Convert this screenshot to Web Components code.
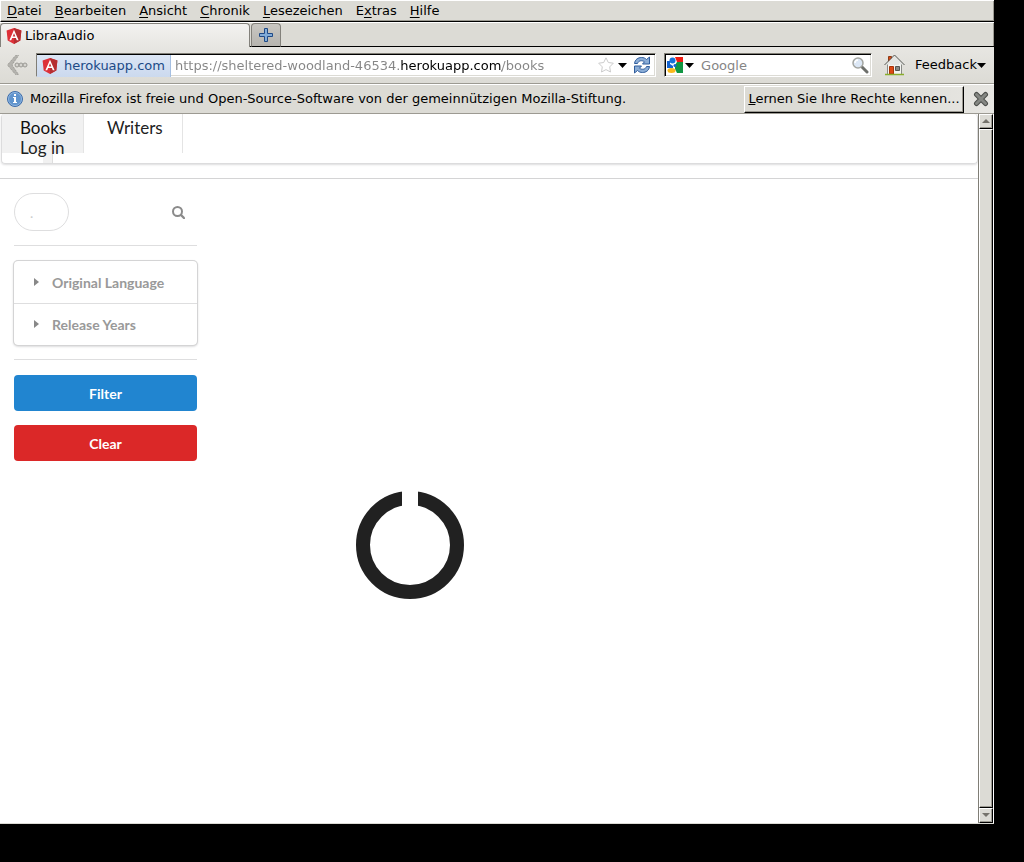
<!DOCTYPE html>
<html lang="de">
<head>
<meta charset="utf-8">
<title>LibraAudio</title>
<style>
html, body { margin: 0; background: #000; }
body { font: 13px/16px "DejaVu Sans", sans-serif; color: #000; }
</style>
</head>
<body>
<browser-window>
  <menu-bar slot="chrome"></menu-bar>
  <tab-strip slot="chrome"></tab-strip>
  <nav-toolbar slot="chrome"></nav-toolbar>
  <info-bar slot="chrome">Mozilla Firefox ist freie und Open-Source-Software von der gemeinnützigen Mozilla-Stiftung.</info-bar>
  <libra-app></libra-app>
</browser-window>

<script>
const define = (name, css, html) => customElements.define(name, class extends HTMLElement {
  constructor() {
    super();
    this.attachShadow({ mode: "open" }).innerHTML =
      `<style>:host,*{box-sizing:border-box}button,input{font:inherit;color:inherit;margin:0;padding:0;border:0;background:none}svg{display:block;flex:none}${css}</style>${html}`;
  }
});

define("angular-icon", `:host{display:block;flex:none}`, `
<svg width="16" height="16" viewBox="0 0 16 16"><path d="M8 0 15.400 2.600 14.300 12.500 8 16 1.700 12.500.600 2.600Z" fill="#dd3038"/><path d="M8 0 15.400 2.600 14.300 12.500 8 16Z" fill="#b52e31"/><path d="M8 1.800 3.400 12.200H5.200L6.100 9.900H9.900L10.800 12.200H12.600ZM8 5.200 9.300 8.400H6.700Z" fill="#fff" fill-rule="evenodd"/></svg>`);

define("browser-window", `
:host{display:flex;flex-direction:column;height:calc(100vh - 38px);margin-right:30px;background:#dcdbd5;overflow:hidden}
.view{flex:1;min-height:0;display:flex;background:#fff;border-bottom:1px solid #dcdbd5}
main{flex:1;min-width:0;overflow:hidden}`, `
<slot name="chrome"></slot>
<div class="view"><main><slot></slot></main><scroll-track></scroll-track></div>`);

define("scroll-track", `
:host{display:flex;flex-direction:column;width:16px;background:#dcdbd5;border-left:1px solid #807e76;border-right:1px solid #fff}
button{display:grid;place-items:center;height:15px;flex:none;border:1px solid;border-color:#fff #000 #000 #fff;box-shadow:inset -1px -1px #9c9a92}
.thumb{flex:1;border:1px solid;border-color:#fff #000 #000 #fff;box-shadow:inset -1px -1px #9c9a92}`, `
<button aria-label="Nach oben"><svg width="8" height="5"><path d="M0 4 4 0 8 4Z" fill="#75736c"/></svg></button>
<div class="thumb"></div>
<button aria-label="Nach unten"><svg width="8" height="5"><path d="M0 0 4 4 8 0Z" fill="#75736c"/></svg></button>`);

define("menu-bar", `
:host{display:flex;height:22px;flex:none;padding-left:1px;border-top:1px solid #fff;border-bottom:1px solid #000;border-left:1px solid #fff;box-shadow:inset -1px -1px #9c9a92}
button{height:19px;padding:0 8px 0 5px;white-space:nowrap}
u{text-underline-offset:2px}`, `
<button><u>D</u>atei</button><button><u>B</u>earbeiten</button><button><u>A</u>nsicht</button><button><u>C</u>hronik</button><button><u>L</u>esezeichen</button><button>E<u>x</u>tras</button><button><u>H</u>ilfe</button>`);

define("tab-strip", `
:host{display:flex;align-items:flex-end;height:25px;flex:none;border-top:1px solid #fff;box-shadow:inset 0 -1px #000,inset -1px 0 #9c9a92}
button{display:flex;align-items:center;height:24px;border:1px solid #83817b;border-bottom:0;border-radius:4px 4px 0 0}
.tab{width:250px;padding:0 5px;gap:3px;background:linear-gradient(#f3f2f0,#e7e6e2)}
.new{width:30px;margin-left:1px;justify-content:center;background:linear-gradient(#c9c7c2,#b6b4af);border-bottom:1px solid #000}`, `
<button class="tab"><angular-icon></angular-icon>LibraAudio</button>
<button class="new" aria-label="Neuer Tab"><svg width="14" height="14"><path d="M5.500.500H8.500V5.500H13.500V8.500H8.500V13.500H5.500V8.500H.500V5.500H5.500Z" fill="#82acd8" stroke="#204a87"/></svg></button>`);

define("nav-toolbar", `
:host{display:flex;align-items:center;height:37px;flex:none;padding:0 8px 0 6px;background:linear-gradient(#e7e6e2,#dcdbd5);border-bottom:1px solid #9c9a92}
.field{display:flex;align-items:center;height:24px;background:#fff;border:1px solid;border-color:#807e76 #fff #fff #807e76;box-shadow:inset 1px 1px #000,inset -1px -1px #dcdbd5}
.url{flex:1;min-width:0;margin-left:8px;padding-right:4px;gap:4px}
.identity{display:flex;align-items:center;gap:6px;height:22px;margin-top:1px;padding:0 5px 0 5px;background:linear-gradient(#dce6f5,#cbd9ee);border-right:1px solid #a5bfe1;color:#204a87}
input{min-width:0;flex:1;height:20px;outline:0}
.url input{color:#858585;background:linear-gradient(90deg,#858585 225px,#000 225px 327px,#858585 327px);-webkit-background-clip:text;background-clip:text;-webkit-text-fill-color:transparent}
.search{width:208px;margin:0 12px 0 8px;padding:0 2px;gap:2px}
.search input{margin-left:5px}
.search input::placeholder{color:#858585;opacity:1}
.icon{display:grid;place-items:center;flex:none}
.back{width:22px;height:24px}
.refresh{margin-left:2px}
.fb{display:flex;align-items:center;margin-left:10px}`, `
<button class="icon back" aria-label="Zurück"><svg width="22" height="22"><path d="M9.500 1.500 1.500 11 9.500 20.500H12.500L6 11 12.500 1.500Z" fill="#b4b3ae" stroke="#92918c" stroke-dasharray="1 1"/><g fill="#d5d4cf" stroke="#999893"><circle cx="11" cy="11" r="2"/><circle cx="15" cy="11" r="2"/><circle cx="19" cy="11" r="2"/></g></svg></button>
<div class="field url"><button class="identity"><angular-icon></angular-icon>herokuapp.com</button>
<input aria-label="Adresse" value="https://sheltered-woodland-46534.herokuapp.com/books">
<button class="icon" aria-label="Lesezeichen setzen"><svg width="16" height="16"><path d="M8 .800 10.300 5.500 15.300 6.200 11.700 9.900 12.500 15 8 12.600 3.500 15 4.300 9.900.700 6.200 5.700 5.500Z" fill="#fff" stroke="#ccc"/></svg></button>
<button class="icon" aria-label="Verlauf"><svg width="9" height="5"><path d="M0 0H9L4.500 5Z"/></svg></button>
<button class="icon refresh" aria-label="Neu laden"><svg width="18" height="18"><g fill="#8badd6" stroke="#2f5c9c"><path d="M1.500 7.500C2 3.500 5 1.500 8.500 1.500 10.500 1.500 12 2 13.500 3.500L16.500 1V8H9.500L11.500 5.800C9 4 5.500 4.500 4.500 7.500Z"/><path d="M16.500 10.500C16 14.500 13 16.500 9.500 16.500 7.500 16.500 6 16 4.500 14.500L1.500 17V10H8.500L6.500 12.200C9 14 12.500 13.500 13.500 10.500Z"/></g></svg></button></div>
<div class="field search"><button class="icon" aria-label="Suchmaschine"><svg width="16" height="16"><path fill="#fff" d="M0 0H16V16H0Z"/><path fill="#1463d0" d="M0 4H3V7L6 9V11H0Z"/><path fill="#ee1c13" d="M8 0H16V5H10Z"/><path fill="#109642" d="M10 5H16V16H10L8 12V8Z"/><circle cx="5.500" cy="3.500" r="3" fill="#1672d8"/><circle cx="8" cy="8.500" r="1.500" fill="#1463d0"/><ellipse cx="4.500" cy="13.500" rx="4" ry="2.500" fill="#f9b91b"/></svg></button>
<button class="icon" aria-label="Suchmaschine wählen"><svg width="9" height="5"><path d="M0 0H9L4.500 5Z"/></svg></button>
<input aria-label="Suche" placeholder="Google">
<button class="icon" aria-label="Suchen"><svg width="18" height="18"><path d="M11 11 16 16" stroke="#6d6f6b" stroke-width="3" stroke-linecap="round"/><circle cx="7" cy="7" r="5" fill="#dce7f5" stroke="#a3a5a0" stroke-width="1.500"/><path d="M4 7a3 3 0 0 1 3-3" stroke="#fff" stroke-width="1.500" fill="none"/></svg></button></div>
<button class="icon" aria-label="Startseite"><svg width="21" height="22"><path d="M4.500 2.500H7.500V9H4.500Z" fill="#dd4814" stroke="#8c3b16"/><path d="M3.500 10 10.500 3 17.500 10V20.500H3.500Z" fill="#f4f4f2" stroke="#888a85"/><path d="M1 10.500 10.500 1.500 20 10.500H16.500L15 9V11H6V9L4.500 10.500Z" fill="#e4e5e2"/><path d="M.500 11 10.500 1 20.500 11" fill="none" stroke="#555753"/><path d="M5.500 12.500H9.500V20H5.500Z" fill="#dd4814" stroke="#a63408"/><path d="M11.500 12.500H15.500V16.500H11.500Z" fill="#888a85" stroke="#555753"/><path d="M1 20.500H20" stroke="#8aae2c" stroke-width="1.500"/></svg></button>
<button class="fb">Feedback<svg width="9" height="5"><path d="M0 0H9L4.500 5Z"/></svg></button>`);

define("info-bar", `
:host{display:flex;align-items:center;height:30px;flex:none;padding:0 5px 0 7px;border-top:1px solid #fff;border-bottom:1px solid #9c9a92;background:linear-gradient(90deg,#dcdbd5,#dcdbd5 85%,#e7e6e2)}
p{flex:1;margin:0 0 0 7px;white-space:nowrap}
.rights{width:220px;height:27px;border:1px solid;border-color:#fff #000 #000 #fff;box-shadow:inset -1px -1px #9c9a92;white-space:nowrap}
.close{margin-left:9px}`, `
<svg width="16" height="16"><circle cx="8" cy="8" r="7.500" fill="#6094cd" stroke="#3e6da9"/><circle cx="8" cy="8" r="6.500" fill="none" stroke="#90b5df"/><path d="M7 3H9V5H7ZM6 6H9V11H10V12H6V11H7V7H6Z" fill="#fff"/></svg>
<p><slot></slot></p>
<button class="rights"><u>L</u>ernen Sie Ihre Rechte kennen...</button>
<button class="close" aria-label="Schließen"><svg width="16" height="16"><path d="M3.500 3.500 12.500 12.500M12.500 3.500 3.500 12.500" stroke="#4c4e4b" stroke-width="5" stroke-linecap="round"/><path d="M3.500 3.500 12.500 12.500M12.500 3.500 3.500 12.500" stroke="#858783" stroke-width="3" stroke-linecap="round"/></svg></button>`);

define("libra-app", `
:host{display:block;font-family:Lato,sans-serif;color:#212121}
.body{display:flex;align-items:flex-start}
filter-panel{width:211px;flex:none}
.results{flex:1;padding:312px 0 0 145px}`, `
<site-nav></site-nav>
<div class="body"><filter-panel></filter-panel>
<section class="results"><svg role="img" aria-label="Loading" width="108" height="108"><circle cx="54" cy="54" r="47" fill="none" stroke="#212121" stroke-width="14"/><path d="M46 0H62V20H46Z" fill="#fff"/></svg></section></div>`);

define("site-nav", `
:host{display:block;height:65px;padding-left:1px;border-bottom:1px solid #d4d4d5}
nav{display:grid;grid-template-columns:82px 99px;grid-template-rows:24px 15px 10px;height:50px;border:1px solid #dcdcdd;border-top:0;border-radius:4px;box-shadow:0 1px 2px #22242626}
a{color:#212121;text-decoration:none;font-size:17px;line-height:20px;white-space:nowrap}
.books,.writers{grid-row:1/3;padding:4px 0 0 18px;border-right:1px solid #e4e4e4}
.books{grid-column:1;background:#f1f1f1;color:#111}
.writers{grid-column:2;padding-left:23px}
.login{grid-column:1;grid-row:2;padding-left:18px;z-index:1}
.edge{grid-column:1;grid-row:3;width:10px;margin-left:41px;background:#f1f1f1;border-right:1px solid #ddd}`, `
<nav><a class="books" href="#books">Books</a><a class="writers" href="#writers">Writers</a><a class="login" href="#login">Log in</a><span class="edge"></span></nav>`);

define("filter-panel", `
:host{display:block;padding:14px;font-size:14px;line-height:20px}
.search{display:flex;align-items:center;justify-content:space-between;padding-right:12px}
input{width:55px;height:38px;padding:0 15px;border:1px solid #dededf;border-radius:19px;font-size:14px}
input::placeholder{color:#ccc;opacity:1}
hr{height:1px;margin:14px 0 15px;border:0;background:#dededf}
.accordion{border-radius:4px;box-shadow:0 0 0 1px #d4d4d5,0 1px 2px 1px #22242626}
summary{display:flex;align-items:center;height:42px;padding:2px 0 0 20px;gap:13px;font-weight:700;color:#999;list-style:none}
details+details summary{padding-top:1px;border-top:1px solid #dededf}
.action{display:block;width:100%;height:36px;padding-top:2px;border-radius:4px;font-weight:700;color:#fff;margin-bottom:14px}
.blue{background:#2185d0}.red{background:#db2828}`, `
<div class="search"><input aria-label="Search" placeholder="."><button aria-label="Search"><svg width="13" height="13"><circle cx="5.500" cy="5.500" r="4.500" fill="none" stroke="#8b8b8b" stroke-width="2"/><path d="M9 9 12 12" stroke="#8b8b8b" stroke-width="2.400" stroke-linecap="round"/></svg></button></div>
<hr>
<div class="accordion">
<details><summary><svg width="5" height="10"><path d="M0 0 5 4 0 8Z" fill="#888"/></svg>Original Language</summary></details>
<details><summary><svg width="5" height="10"><path d="M0 0 5 4 0 8Z" fill="#888"/></svg>Release Years</summary></details>
</div>
<hr>
<button class="action blue">Filter</button><button class="action red">Clear</button>`);
</script>
</body>
</html>
